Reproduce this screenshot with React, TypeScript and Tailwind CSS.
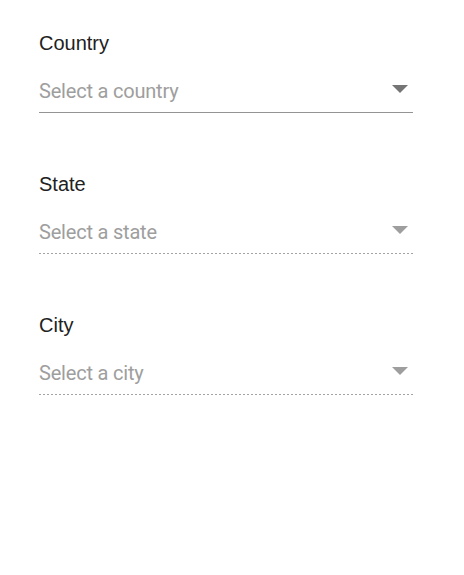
import React from 'react';

interface SelectFieldProps {
  label: string;
  placeholder: string;
  disabled?: boolean;
}

const Arrow: React.FC<{ disabled?: boolean }> = ({ disabled }) => (
  <svg width="16" height="8" viewBox="0 0 16 8" className="mt-[-4px] mr-[5px]">
    <path d="M0 0h16L8 8z" fill={disabled ? '#9e9e9e' : '#757575'} />
  </svg>
);

const SelectField: React.FC<SelectFieldProps> = ({ label, placeholder, disabled = false }) => (
  <div className="w-[374px]">
    <div className="font-['Liberation_Sans',Arial,sans-serif] text-[20px] leading-[24px] text-[#212121]">
      {label}
    </div>
    <div className="mt-[24px] flex items-center justify-between pb-[9px]">
      <span className="font-['Roboto',sans-serif] text-[20px] leading-[24px] tracking-[-0.2px] text-[#9e9e9e]">
        {placeholder}
      </span>
      <Arrow disabled={disabled} />
    </div>
    {disabled ? (
      <div className="h-px w-full bg-[linear-gradient(to_right,#a3a3a3_0%,#a3a3a3_50%,transparent_50%)] bg-[length:4px_1px] bg-repeat-x" />
    ) : (
      <div className="h-px w-full bg-[#949494]" />
    )}
  </div>
);

export default function App() {
  return (
    <div className="flex min-h-[575px] w-[464px] flex-col gap-[59px] bg-white pl-[39px] pt-[31px]">
      <SelectField label="Country" placeholder="Select a country" />
      <SelectField label="State" placeholder="Select a state" disabled />
      <SelectField label="City" placeholder="Select a city" disabled />
    </div>
  );
}
